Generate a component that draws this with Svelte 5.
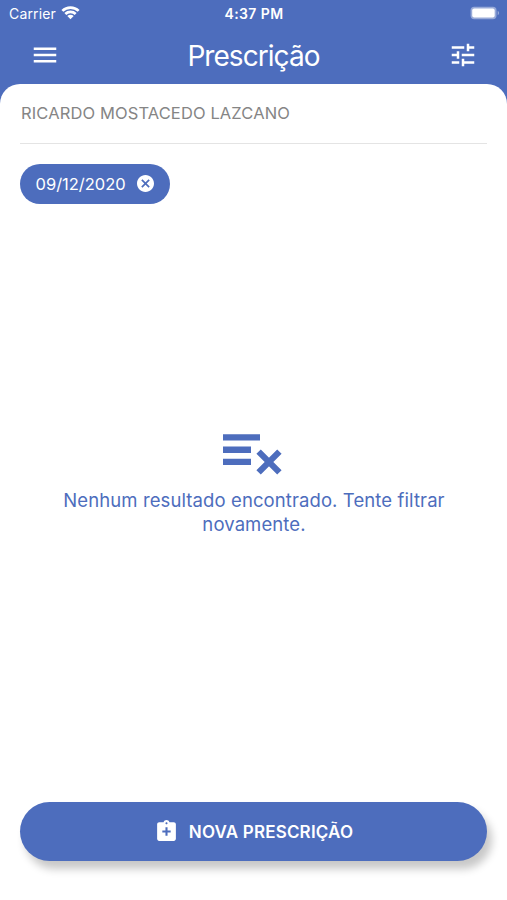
<script>
	let patient = 'RICARDO MOSTACEDO LAZCANO';
	let filters = ['09/12/2020'];

	const removeFilter = (date) => {
		filters = filters.filter((item) => item !== date);
	};
</script>

<main>
	<header>
		<div class="status-bar">
			<div class="carrier">
				<span>Carrier</span>
				<svg class="wifi" viewBox="0 0 18 14">
					<path d="M0.4 4.6a12.3 12.3 0 0 1 17.2 0L15.8 6.4a9.7 9.7 0 0 0-13.6 0z" />
					<path d="M3.2 7.5a8.3 8.3 0 0 1 11.6 0L13 9.3a5.7 5.7 0 0 0-8 0z" />
					<path d="M6 10.4a4.3 4.3 0 0 1 6 0L9 13.5z" />
				</svg>
			</div>
			<span class="time">4:37 PM</span>
			<svg class="battery" viewBox="0 0 31 14">
				<rect x="0.6" y="0.6" width="26.8" height="12.8" rx="3.8" />
				<rect class="level" x="2.3" y="2.3" width="23.2" height="9.4" rx="2" />
				<path d="M28.6 4.8c2 .8 2 3.6 0 4.4z" />
			</svg>
		</div>

		<nav class="navbar">
			<button aria-label="Menu">
				<svg viewBox="0 0 24 24"><path d="M3 18h18v-2H3v2zm0-5h18v-2H3v2zm0-7v2h18V6H3z" /></svg>
			</button>
			<h1>Prescrição</h1>
			<button aria-label="Filtrar">
				<svg viewBox="0 0 24 24">
					<path
						d="M3 17v2h6v-2H3zM3 5v2h10V5H3zm10 16v-2h8v-2h-8v-2h-2v6h2zM7 9v2H3v2h4v2h2V9H7zm14 4v-2H11v2h10zm-6-4h2V7h4V5h-4V3h-2v6z"
					/>
				</svg>
			</button>
		</nav>
	</header>

	<section class="sheet">
		<p class="patient">{patient}</p>

		<div class="filters">
			{#each filters as date}
				<div class="chip">
					<span>{date}</span>
					<button aria-label="Remover" on:click={() => removeFilter(date)}>
						<svg viewBox="2 2 20 20">
							<path
								d="M12 2C6.47 2 2 6.47 2 12s4.47 10 10 10 10-4.47 10-10S17.53 2 12 2zm5 13.59L15.59 17 12 13.41 8.41 17 7 15.59 10.59 12 7 8.41 8.41 7 12 10.59 15.59 7 17 8.41 13.41 12 17 15.59z"
							/>
						</svg>
					</button>
				</div>
			{/each}
		</div>

		<!-- Empty state -->
		<div class="empty">
			<svg viewBox="0 0 60 42">
				<path d="M0 0.3h37v6.3H0zM0 12.6h28v6.3H0zM0 24.8h28v6.3H0z" />
				<path class="cross" d="M35.6 17.6L56.4 38.4M56.4 17.6L35.6 38.4" />
			</svg>
			<p>Nenhum resultado encontrado. Tente filtrar novamente.</p>
		</div>

		<button class="btn">
			<svg viewBox="0 0 24 24">
				<path
					d="M19 3h-4.18C14.4 1.84 13.3 1 12 1s-2.4.84-2.82 2H5c-1.1 0-2 .9-2 2v14c0 1.1.9 2 2 2h14c1.1 0 2-.9 2-2V5c0-1.1-.9-2-2-2zm-7 0c.55 0 1 .45 1 1s-.45 1-1 1-1-.45-1-1 .45-1 1-1zm4 10h-3v3h-2v-3H8v-2h3V8h2v3h3v2z"
				/>
			</svg>
			<span>NOVA PRESCRIÇÃO</span>
		</button>
	</section>
</main>

<style>
	:global(body) {
		margin: 0;
	}

	main {
		display: flex;
		flex-direction: column;
		height: 100vh;
		background-color: #4d6dbd;
		color: white;
		font-family: Inter, 'Liberation Sans', sans-serif;
	}

	svg {
		display: block;
		fill: currentColor;
	}

	button {
		padding: 0;
		border: none;
		background: none;
		color: inherit;
		font-family: inherit;
		cursor: pointer;
	}

	.status-bar {
		display: grid;
		grid-template-columns: 1fr auto 1fr;
		align-items: center;
		height: 27px;
		padding: 0 7px 0 9px;
		font-size: 14px;
	}

	.carrier {
		display: flex;
		align-items: center;
		gap: 5px;
		letter-spacing: 0.15px;
	}

	.wifi {
		width: 19px;
		height: 15px;
		margin-top: -3px;
	}

	.time {
		margin-right: 1px;
		font-weight: 600;
		font-size: 14px;
		letter-spacing: 0.4px;
	}

	.battery {
		justify-self: end;
		width: 30px;
		height: 14px;
		margin-top: -1px;
		fill: #98aad8;
	}

	.battery .level {
		fill: white;
	}

	.navbar {
		display: flex;
		justify-content: space-between;
		align-items: center;
		box-sizing: border-box;
		height: 57px;
		padding: 0 29px 2px 30px;
	}

	.navbar svg {
		width: 30px;
		height: 30px;
	}

	h1 {
		margin: 2px 1px 0 0;
		font-size: 28px;
		font-weight: 400;
		letter-spacing: -0.95px;
	}

	.sheet {
		display: flex;
		flex-direction: column;
		flex: 1;
		box-sizing: border-box;
		padding: 0 20px 39px;
		border-radius: 20px 20px 0 0;
		background-color: white;
	}

	.patient {
		height: 59px;
		margin: 0;
		padding-left: 1px;
		border-bottom: 1px solid #e4e4e4;
		color: #858585;
		font-size: 16.5px;
		letter-spacing: 0.12px;
		line-height: 58px;
	}

	.filters {
		display: flex;
		height: 40px;
		margin-top: 19.5px;
	}

	.chip {
		display: flex;
		align-items: center;
		gap: 11.5px;
		padding: 0 16px 0 15.5px;
		border-radius: 20px;
		background-color: #4d6dbd;
		font-size: 16.5px;
	}

	.chip svg {
		width: 17px;
		height: 17px;
	}

	.empty {
		display: flex;
		flex-direction: column;
		flex: 1;
		justify-content: center;
		align-items: center;
		color: #4d6dbd;
	}

	.empty svg {
		width: 60px;
		height: 42px;
		margin-right: 2px;
	}

	.cross {
		fill: none;
		stroke: currentColor;
		stroke-width: 6.2;
	}

	.empty p {
		width: 400px;
		margin: 13.5px 0 35.5px 1px;
		font-size: 18.5px;
		letter-spacing: 0.1px;
		line-height: 23.5px;
		text-align: center;
	}

	.btn {
		display: flex;
		justify-content: center;
		align-items: center;
		box-sizing: border-box;
		gap: 10px;
		height: 59px;
		border-radius: 30px;
		background-color: #4d6dbd;
		box-shadow: 5px 8px 9px rgba(0, 0, 0, 0.22);
		font-size: 17px;
		font-weight: 600;
		letter-spacing: 0.18px;
	}

	.btn svg {
		width: 25px;
		height: 25px;
		margin-top: -1px;
	}
</style>
